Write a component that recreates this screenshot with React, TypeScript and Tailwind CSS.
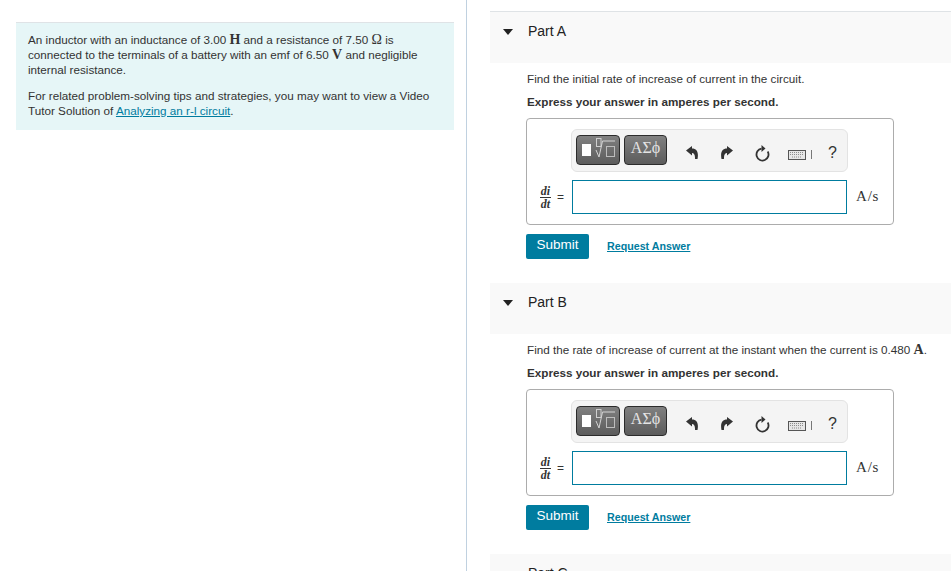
const serif = 'font-["Liberation_Serif",serif]';
const mathText = 'font-["Liberation_Serif",serif] text-[14px] font-bold leading-none';

function Templates() {
  return (
    <div className="ml-[4px] flex h-[30px] w-[43px] items-center justify-center rounded-[4px] border border-[#2b2b2b] bg-gradient-to-b from-[#808080] to-[#5c5c5c]">
      <span className={`${serif} -mt-[4px] text-[16px] leading-none text-[#e4e4e4]`}>ΑΣϕ</span>
    </div>
  );
}

function MathButton() {
  return (
    <div className="h-[30px] w-[44px] rounded-[4px] border border-[#2b2b2b] bg-gradient-to-b from-[#808080] to-[#5c5c5c]">
      <svg width="42" height="28" viewBox="0 0 42 28" fill="none">
        <rect x="5" y="8" width="9" height="12" fill="#ffffff" />
        <rect x="19.500" y="2.500" width="4.500" height="8" stroke="#cfcfcf" />
        <path d="M19 14l3 7 3.500-16H38" stroke="#d4d4d4" />
        <rect x="29.500" y="10.500" width="8" height="10" stroke="#bdbdbd" />
      </svg>
    </div>
  );
}

function Toolbar() {
  return (
    <div className="ml-[44px] flex h-[43px] w-[277px] items-start rounded-[6px] border border-[#e3e3e3] bg-[#f4f4f4] pl-[4px] pt-[5px]">
      <MathButton />
      <Templates />
      {/* undo */}
      <svg className="ml-[19px] mt-[11px]" width="12" height="13" viewBox="0 0 12 13" fill="#333333">
        <path d="M6 0L0 4.500 6 9.500V7C8 7 9.300 9 9 13H11.500C12.800 6.500 11 2.500 6 2.500z" />
      </svg>
      {/* redo */}
      <svg className="ml-[23px] mt-[11px]" width="12" height="13" viewBox="0 0 12 13" fill="#333333">
        <path d="M6 0L12 4.500 6 9.500V7C4 7 2.700 9 3 13H0.500C-0.800 6.500 1 2.500 6 2.500z" />
      </svg>
      {/* reset */}
      <svg className="ml-[22px] mt-[10px]" width="15" height="17" viewBox="0 0 15 17" fill="none">
        <path d="M12.700 6.500A6 6 0 1 1 6.500 3.600" stroke="#333333" strokeWidth="1.800" />
        <path d="M6.500 0L10.500 3.500 6.500 7z" fill="#333333" />
      </svg>
      {/* keyboard */}
      <svg className="ml-[18px] mt-[15px]" width="18" height="10" viewBox="0 0 18 10" fill="none">
        <rect x="0.500" y="0.500" width="17" height="9" fill="#e6e6e6" stroke="#555555" />
        <path d="M2 2.500h14M2 4.500h14M4 7h10" stroke="#8c8c8c" strokeDasharray="1 1" />
      </svg>
      <div className="ml-[5px] mt-[15px] h-[9px] w-px bg-[#777777]" />
      <span className="ml-[16px] mt-[9px] text-[16px] leading-[18px] text-[#333333]">?</span>
    </div>
  );
}

function AnswerBox() {
  return (
    <div className="h-[107px] w-[368px] rounded-[4px] border border-[#acacac] bg-white pt-[10px]">
      <Toolbar />
      <div className="mt-[8px] flex items-center">
        <div className={`${serif} ml-[12px] flex w-[13px] flex-col items-center text-[12px] font-bold italic leading-[12px] text-[#333333]`}>
          <span className="border-b border-[#333333] px-px">di</span>
          <span>dt</span>
        </div>
        <span className="ml-[5px] text-[12px] text-[#333333]">=</span>
        <div className="ml-[8px] h-[34px] w-[275px] border border-[#007c9f] bg-white" />
        <span className={`${serif} -mt-[2px] ml-[9px] text-[15px] tracking-[0.8px] text-[#333333]`}>A/s</span>
      </div>
    </div>
  );
}

function Part({ name, prompt }: { name: string; prompt?: React.ReactNode }) {
  return (
    <section className="box-content h-[271px] first:border-t first:border-[#dfe3e6]">
      <div className="flex h-[51px] items-start bg-[#f9f9f9] pt-[11px]">
        {prompt && (
          <svg className="ml-[13px] mt-[6px]" width="10" height="6" viewBox="0 0 10 6" fill="#222222">
            <path d="M0 0h10L5 6z" />
          </svg>
        )}
        <span className={`text-[14px] leading-[17px] text-[#222222] ${prompt ? 'ml-[15px]' : 'ml-[38px]'}`}>{name}</span>
      </div>
      {prompt && (
        <div className="pl-[36px] pt-[8px]">
          <p className="ml-px text-[11.700px] leading-[15px] text-[#333333]">{prompt}</p>
          <p className="ml-px mt-[8px] text-[11.700px] font-bold leading-[15px] text-[#333333]">Express your answer in amperes per second.</p>
          <div className="mt-[9px]">
            <AnswerBox />
          </div>
          <div className="mt-[9px] flex items-center">
            <button className="h-[25px] w-[63px] rounded-[2px] bg-[#007c9f] pb-[2px] text-[13.500px] text-white">Submit</button>
            <a className="ml-[18px] text-[10.700px] font-bold text-[#007c9f] underline">Request Answer</a>
          </div>
        </div>
      )}
    </section>
  );
}

export default function App() {
  return (
    <div className="flex h-[571px] w-[951px] overflow-hidden bg-white font-['Liberation_Sans',sans-serif]">
      <aside className="h-full w-[467px] shrink-0 border-r border-[#c0d1e0] pl-[16px] pt-[22px]">
        <div className="h-[108px] w-[438px] border-t border-[#dfe3e6] bg-[#e6f6f7] px-[12px] pt-[9px] text-[11.700px] leading-[15px] text-[#333333]">
          <p>
            An inductor with an inductance of 3.00 <span className={mathText}>H</span> and a resistance of 7.50 <span className={`${serif} text-[14px] leading-none`}>Ω</span> is connected to the terminals of a battery with an emf of 6.50 <span className={mathText}>V</span> and negligible internal resistance.
          </p>
          <p className="mt-[11px]">
            For related problem-solving tips and strategies, you may want to view a Video Tutor Solution of <a className="text-[#007c9f] underline">Analyzing an r-l circuit</a>.
          </p>
        </div>
      </aside>
      <main className="min-w-0 flex-1 pl-[23px] pt-[11px]">
        <Part name="Part A" prompt="Find the initial rate of increase of current in the circuit." />
        <Part
          name="Part B"
          prompt={<>Find the rate of increase of current at the instant when the current is 0.480 <span className={mathText}>A</span>.</>}
        />
        <Part name="Part C" />
      </main>
    </div>
  );
}
